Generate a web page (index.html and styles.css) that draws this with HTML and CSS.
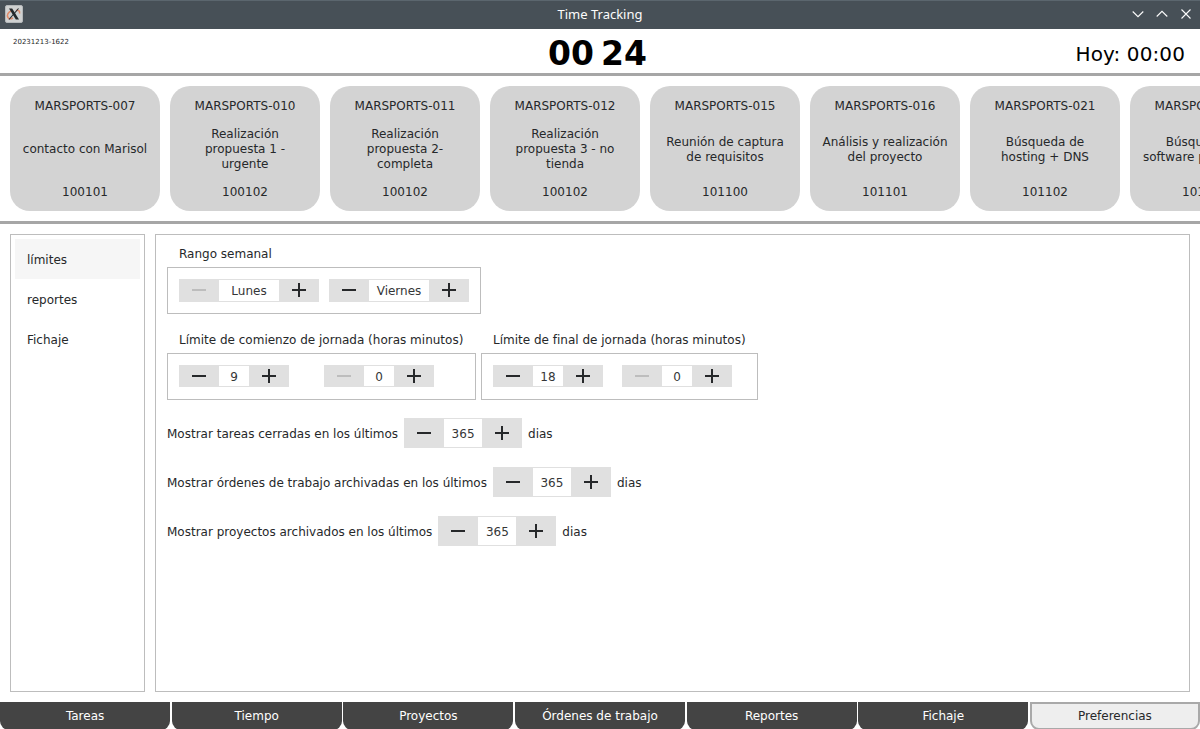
FILE: index.html
```html
<!DOCTYPE html>
<html lang="es">
<head>
<meta charset="utf-8">
<title>Time Tracking</title>
<link rel="stylesheet" href="styles.css">
</head>
<body>
<header class="titlebar">
  <svg class="app-icon" width="18" height="18" viewBox="0 0 18 18"><rect x=".5" y=".5" width="17" height="17" rx="1.5" fill="#cfd1d1" stroke="#b4b8ba"/><path d="M7 5.500C3 7 1.500 10 3 12.500c1 1.500 3 1.500 5 .5M11 5.500c3-.5 4 .5 3.500 3" fill="none" stroke="#e08a68" stroke-width="1.500"/><path d="M4 3.500h3.200l6.800 11h-3.200z" fill="#24282b"/><path d="M13.500 3.500 4 14.500" stroke="#24282b" stroke-width="1.100"/></svg>
  <h1 class="title">Time Tracking</h1>
  <div class="window-buttons">
    <svg width="12" height="12" viewBox="0 0 12 12"><path d="M.7 3.500 6 8.700l5.300-5.200"/></svg>
    <svg width="12" height="12" viewBox="0 0 12 12"><path d="M.7 8.500 6 3.300l5.300 5.200"/></svg>
    <svg width="12" height="12" viewBox="0 0 12 12"><path d="m1.500 1.500 9 9m0-9-9 9"/></svg>
  </div>
</header>
<section class="clockbar">
  <span class="version">20231213-1622</span>
  <div class="clock"><span>00</span><span>24</span></div>
  <span class="today">Hoy: 00:00</span>
</section>
<section class="cards">
  <article class="card"><span>MARSPORTS-007</span><p>contacto con Marisol</p><span>100101</span></article>
  <article class="card"><span>MARSPORTS-010</span><p>Realización<br>propuesta 1 -<br>urgente</p><span>100102</span></article>
  <article class="card"><span>MARSPORTS-011</span><p>Realización<br>propuesta 2-<br>completa</p><span>100102</span></article>
  <article class="card"><span>MARSPORTS-012</span><p>Realización<br>propuesta 3 - no<br>tienda</p><span>100102</span></article>
  <article class="card"><span>MARSPORTS-015</span><p>Reunión de captura<br>de requisitos</p><span>101100</span></article>
  <article class="card"><span>MARSPORTS-016</span><p>Análisis y realización<br>del proyecto</p><span>101101</span></article>
  <article class="card"><span>MARSPORTS-021</span><p>Búsqueda de<br>hosting + DNS</p><span>101102</span></article>
  <article class="card"><span>MARSPORTS-022</span><p>Búsqueda de<br>software para tareas</p><span>101103</span></article>
</section>
<main class="main">
  <nav class="side">
    <a class="side-item active">límites</a>
    <a class="side-item">reportes</a>
    <a class="side-item">Fichaje</a>
  </nav>
  <section class="content">
    <div class="group">
      <h2 class="group-title">Rango semanal</h2>
      <div class="box week">
        <div class="stepper day"><button class="minus" disabled></button><output>Lunes</output><button class="plus"></button></div>
        <div class="stepper day"><button class="minus"></button><output>Viernes</output><button class="plus"></button></div>
      </div>
    </div>
    <div class="limits">
      <div class="group">
        <h2 class="group-title">Límite de comienzo de jornada (horas minutos)</h2>
        <div class="box start">
          <div class="stepper hour"><button class="minus"></button><output>9</output><button class="plus"></button></div>
          <div class="stepper hour"><button class="minus" disabled></button><output>0</output><button class="plus"></button></div>
        </div>
      </div>
      <div class="group">
        <h2 class="group-title">Límite de final de jornada (horas minutos)</h2>
        <div class="box end">
          <div class="stepper hour"><button class="minus"></button><output>18</output><button class="plus"></button></div>
          <div class="stepper hour"><button class="minus" disabled></button><output>0</output><button class="plus"></button></div>
        </div>
      </div>
    </div>
    <div class="rows">
      <div class="row"><span>Mostrar tareas cerradas en los últimos</span><div class="stepper days"><button class="minus"></button><output>365</output><button class="plus"></button></div><span>dias</span></div>
      <div class="row"><span>Mostrar órdenes de trabajo archivadas en los últimos</span><div class="stepper days"><button class="minus"></button><output>365</output><button class="plus"></button></div><span>dias</span></div>
      <div class="row"><span>Mostrar proyectos archivados en los últimos</span><div class="stepper days"><button class="minus"></button><output>365</output><button class="plus"></button></div><span>dias</span></div>
    </div>
  </section>
</main>
<footer class="tabs">
  <a class="tab">Tareas</a>
  <a class="tab">Tiempo</a>
  <a class="tab">Proyectos</a>
  <a class="tab">Órdenes de trabajo</a>
  <a class="tab">Reportes</a>
  <a class="tab">Fichaje</a>
  <a class="tab selected">Preferencias</a>
</footer>
</body>
</html>
```
FILE: styles.css
```css
* { box-sizing: border-box; }
body {
  margin: 0;
  width: 1200px;
  height: 729px;
  overflow: hidden;
  display: flex;
  flex-direction: column;
  background: #fff;
  color: #26282a;
  font: 12px/15px "DejaVu Sans", sans-serif;
}
.titlebar {
  flex: none;
  height: 29px;
  display: grid;
  grid-template-columns: 1fr auto 1fr;
  align-items: center;
  padding: 0 8px 2px 5px;
  background: #475057;
  border-top: 1px solid #5b666e;
}
.title {
  margin: 0;
  padding-left: 3px;
  color: #fcfcfc;
  font: 13px/18px "Noto Sans", sans-serif;
}
.window-buttons {
  justify-self: end;
  display: flex;
  gap: 12px;
  fill: none;
  stroke: #fcfcfc;
  stroke-width: 1.1;
}
.clockbar {
  flex: none;
  height: 47px;
  display: grid;
  grid-template-columns: 1fr auto 1fr;
  padding: 0 15px 0 13px;
  border-bottom: 3px solid #a6a6a6;
}
.version { font-size: 7px; line-height: 9px; padding-top: 9px; }
.clock {
  display: flex;
  gap: 7px;
  padding: 5px 3px 0 0;
  color: #000;
  font-size: 33px;
  line-height: 40px;
  font-weight: bold;
}
.today {
  justify-self: end;
  padding-top: 13px;
  color: #000;
  font-size: 20px;
  line-height: 24px;
  letter-spacing: 0.1px;
}
.cards {
  flex: none;
  height: 148px;
  display: flex;
  gap: 10px;
  padding: 10px 0 0 10px;
  overflow: hidden;
  border-bottom: 3px solid #a6a6a6;
}
.card {
  flex: none;
  width: 150px;
  height: 125px;
  display: flex;
  flex-direction: column;
  align-items: center;
  padding: 13px 0 11px;
  border-radius: 20px;
  background: #d3d3d3;
  text-align: center;
}
.card p { flex: 1; margin: 0; display: flex; align-items: center; }
.main { flex: 1; display: flex; gap: 10px; padding: 10px; min-height: 0; }
.side, .content { border: 1px solid #bdbdbd; }
.side { width: 135px; padding: 4px; }
.side-item { display: block; height: 40px; padding: 0 12px; line-height: 42px; }
.side-item.active { background: #f6f6f6; }
.content { flex: 1; padding: 12px 11px 11px; }
.group-title { margin: 0; padding: 0 12px 5px; font-size: 12px; line-height: 15px; font-weight: normal; }
.box { height: 47px; display: flex; align-items: flex-start; padding: 11px; border: 1px solid #bdbdbd; }
.week { width: 314px; gap: 10px; }
.start { width: 309px; gap: 35px; }
.end { width: 277px; gap: 19px; }
.limits { display: flex; gap: 5px; margin-top: 19px; }
.stepper { display: flex; background: #fff; }
.stepper output {
  display: flex;
  align-items: center;
  justify-content: center;
  border: solid #e0e0e0;
  border-width: 1px 0;
  color: #353637;
}
.stepper button {
  width: 40px;
  padding: 0;
  border: 0;
  color: #26282a;
  background: #e0e0e0;
  display: grid;
  place-items: center;
}
.stepper button:disabled { color: #bdbdbd; }
.minus::before { content: ""; width: 14px; height: 2px; background: currentColor; }
.plus::before {
  content: "";
  width: 14px;
  height: 14px;
  background: linear-gradient(currentColor, currentColor) center / 14px 2px no-repeat,
    linear-gradient(currentColor, currentColor) center / 2px 14px no-repeat;
}
.day { height: 23px; }
.day output { width: 60px; padding-top: 1px; }
.day button { padding-bottom: 1px; }
.hour { height: 22px; }
.hour output { width: 30px; padding-top: 2px; }
.days { height: 30px; }
.days output { width: 38px; padding-top: 2px; }
.rows { display: grid; gap: 19px; margin-top: 18px; }
.row { display: flex; align-items: center; gap: 6px; }
.row > span { padding-top: 2px; }
.tabs { flex: none; height: 27px; display: grid; grid-template-columns: repeat(7, 1fr); gap: 1.5px; }
.tab {
  border-radius: 0 0 9px 9px;
  background: #444;
  color: #fff;
  line-height: 28px;
  text-align: center;
}
.tab.selected {
  border: 2px solid #a9a9a9;
  background: #eee;
  color: #26282a;
  line-height: 24px;
}
```
